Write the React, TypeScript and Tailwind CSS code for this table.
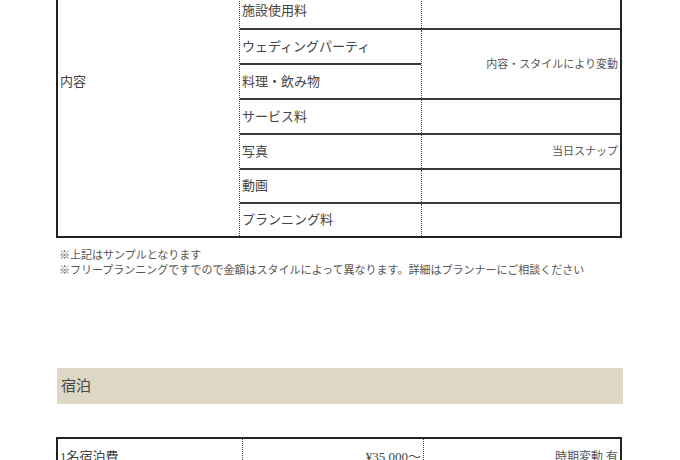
const serif = 'font-["Liberation_Serif","Noto_Sans_CJK_JP",serif]';

function Row({ label, note, first, h = 'h-[35px]' }: { label: string; note?: string; first?: boolean; h?: string }) {
  return (
    <div className={`flex ${h} ${first ? '' : 'border-t-2 border-[#3a3a3a]'}`}>
      <div className="flex w-[182px] items-center border-r border-dotted border-[#444] pl-[2px] text-[13px] text-[#444]">
        {label}
      </div>
      <div className="flex flex-1 items-center justify-end pr-[2px] text-[11px] text-[#555]">{note}</div>
    </div>
  );
}

export default function App() {
  return (
    <div className={`h-[460px] w-[680px] overflow-hidden bg-white ${serif}`}>
      <div className="ml-[56px] mt-[-9px] flex w-[566px] border-2 border-[#222]">
        <div className="flex w-[182px] items-center border-r border-dotted border-[#444] pb-[65px] pl-[2px] text-[13px] text-[#444]">
          内容
        </div>
        <div className="flex flex-1 flex-col">
          <Row label="施設使用料" first />
          <div className="flex border-t-2 border-[#3a3a3a]">
            <div className="flex w-[182px] flex-col border-r border-dotted border-[#444]">
              <div className="flex h-[33px] items-center pl-[2px] text-[13px] text-[#444]">ウェディングパーティ</div>
              <div className="flex h-[35px] items-center border-t-2 border-[#3a3a3a] pl-[2px] text-[13px] text-[#444]">
                料理・飲み物
              </div>
            </div>
            <div className="flex flex-1 items-center justify-end pr-[2px] text-[11px] text-[#555]">
              内容・スタイルにより変動
            </div>
          </div>
          <Row label="サービス料" />
          <Row label="写真" note="当日スナップ" />
          <Row label="動画" h="h-[34px]" />
          <Row label="プランニング料" h="h-[34px]" />
        </div>
      </div>

      <div className="ml-[59px] mt-[10px] text-[11px] leading-[15px] text-[#555]">
        <p>※上記はサンプルとなります</p>
        <p>※フリープランニングですでので金額はスタイルによって異なります。詳細はプランナーにご相談ください</p>
      </div>

      <div className="ml-[57px] mt-[90px] flex h-[36px] w-[566px] items-center bg-[#ddd8c5] pl-[4px] text-[15px] text-[#444]">
        宿泊
      </div>

      <div className="ml-[56px] mt-[33px] flex w-[566px] border-2 border-[#222]">
        <div className="flex h-[35px] w-[185px] items-center border-r border-dotted border-[#444] pl-[2px] text-[13px] text-[#444]">
          1名宿泊費
        </div>
        <div className="flex h-[35px] w-[181px] items-center justify-end border-r border-dotted border-[#444] pr-[2px] text-[13px] text-[#444]">
          ¥35,000～
        </div>
        <div className="flex h-[35px] flex-1 items-center justify-end pr-[2px] text-[12px] text-[#555]">時期変動 有</div>
      </div>
    </div>
  );
}
